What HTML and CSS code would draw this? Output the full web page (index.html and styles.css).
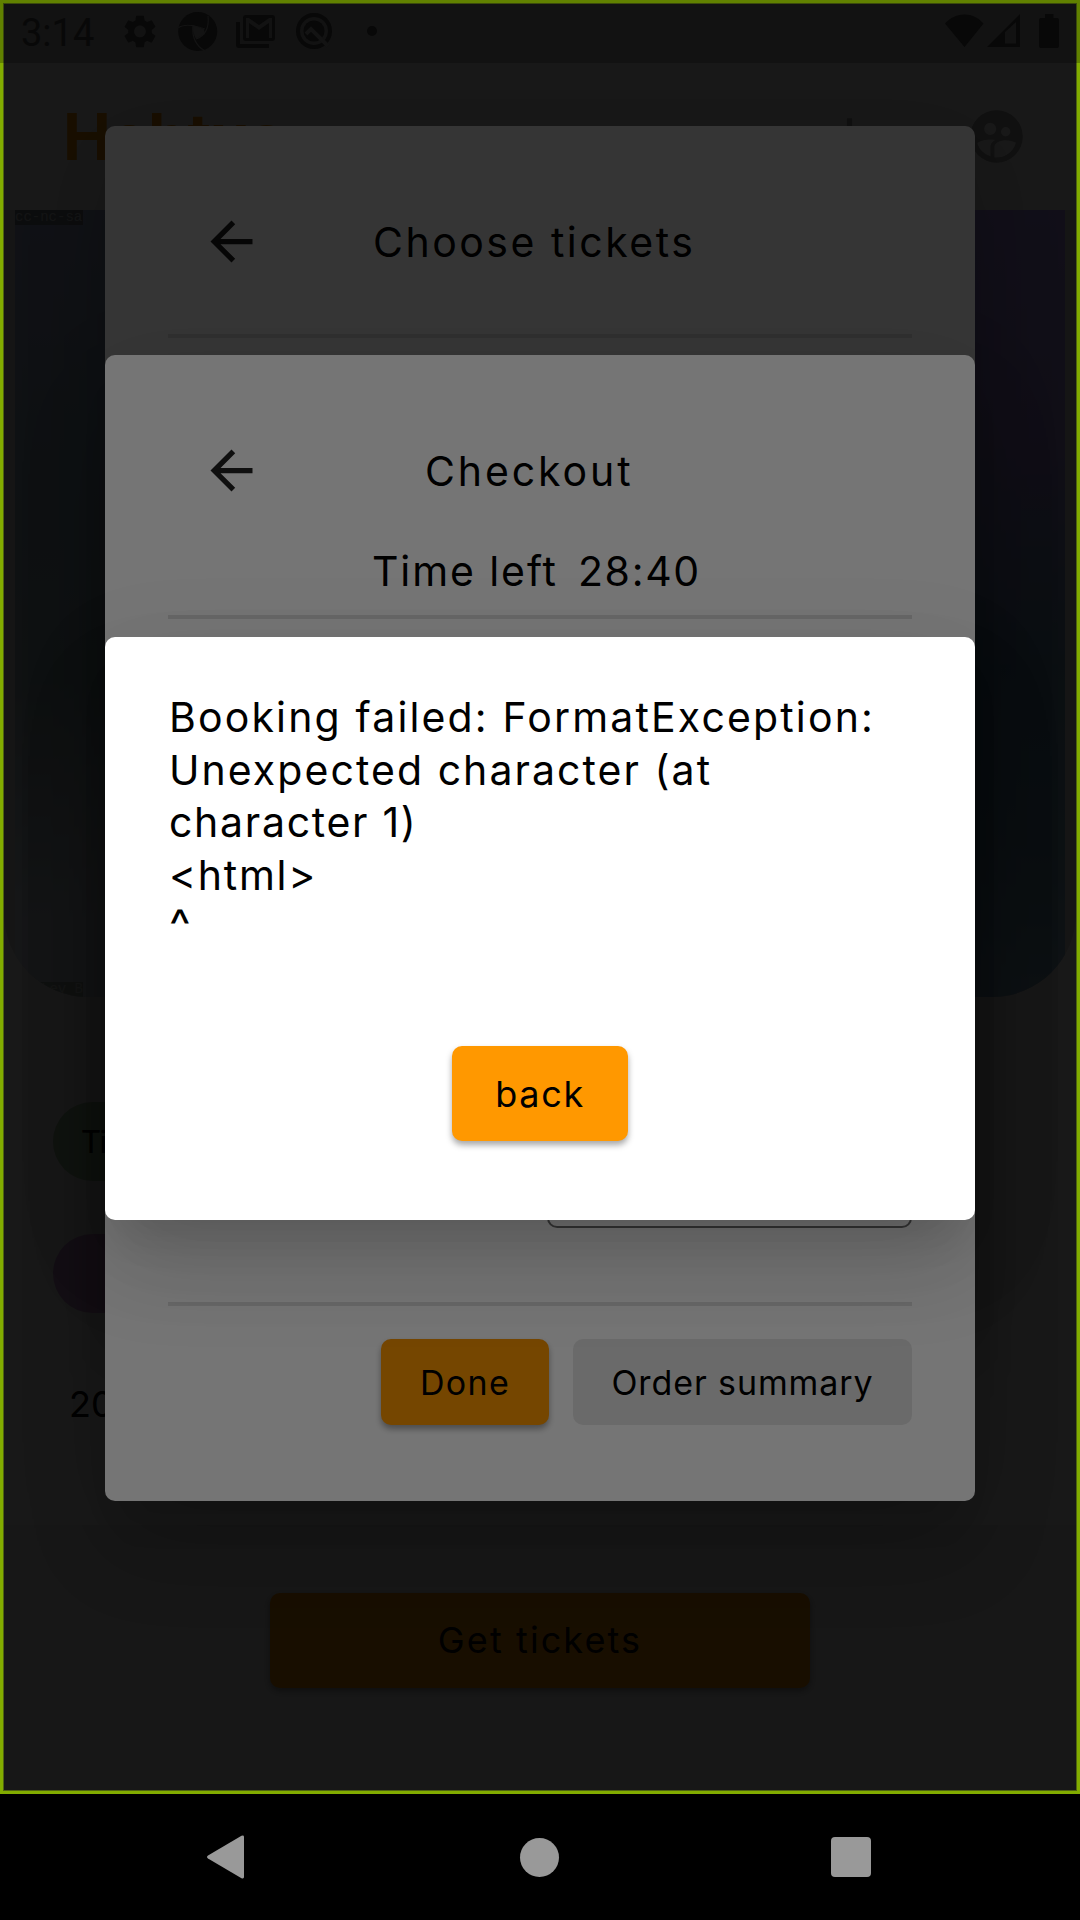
FILE: index.html
```html
<!DOCTYPE html>
<html lang="en">
<head>
<meta charset="utf-8">
<title>Hobtus</title>
<link rel="stylesheet" href="styles.css">
</head>
<body>
<div class="device">
  <div class="screen">
    <div class="app">
      <header class="appbar">
        <span class="brand">Hobtus</span>
        <span class="actions">
          <svg viewBox="0 0 24 24"><path d="M19 13h-6v6h-2v-6H5v-2h6V5h2v6h6z"/></svg>
          <svg viewBox="0 0 24 24"><path fill-rule="evenodd" d="M12 2a10 10 0 1 0 0 20 10 10 0 0 0 0-20zM9.600 6.800a2.300 2.300 0 1 1 0 4.600 2.300 2.300 0 0 1 0-4.600zM15.500 8.400a1.800 1.800 0 1 1 0 3.600 1.800 1.800 0 0 1 0-3.600zM9.700 19.500C7.300 18.800 5.300 16.900 4.700 14.500c1.300-1.100 4.500-1.700 6.800-1.200-1.300.7-1.800 1.700-1.800 2.500zM11.200 20v-4c0-1.700 2.300-2.600 4.300-2.600 1.500 0 3 .4 3.900.9-.8 3.500-4 6-8.200 5.700z"/></svg>
        </span>
      </header>
      <div class="poster"><div class="photo"><span class="tag">cc-nc-sa</span><span class="tag tag-low">Lev B</span></div></div>
      <div class="chips">
        <span class="chip green">Tickets</span>
        <span class="chip purple"></span>
      </div>
      <div class="date">2022-06-18</div>
      <footer class="footer"><div class="cta">Get tickets</div></footer>
    </div>
    <div class="scrim"></div>
    <section class="dialog tickets">
      <div class="head"><svg class="back" viewBox="0 0 24 24"><path d="M20 11H7.830l5.590-5.590L12 4l-8 8 8 8 1.410-1.410L7.830 13H20z"/></svg><span class="title-tickets">Choose tickets</span></div>
      <div class="rule"></div>
    </section>
    <div class="scrim"></div>
    <section class="dialog checkout">
      <div class="head"><svg class="back" viewBox="0 0 24 24"><path d="M20 11H7.830l5.590-5.590L12 4l-8 8 8 8 1.410-1.410L7.830 13H20z"/></svg><span class="title-checkout">Checkout</span></div>
      <div class="timer"><span class="time-label">Time left</span><span class="time-value">28:40</span></div>
      <div class="rule"></div>
      <div class="form"><div class="field"></div></div>
      <div class="rule"></div>
      <div class="row"><span class="btn orange">Done</span><span class="btn grey">Order summary</span></div>
    </section>
    <div class="scrim"></div>
    <section class="dialog error">
      <p class="msg"><span class="wide">Booking failed: FormatException:</span><br><span class="mid">Unexpected character (at</span><br><span class="tight">character 1)</span><br><span class="tight">&lt;html&gt;</span><br><span class="caret">^</span></p>
      <span class="btn orange ok">back</span>
    </section>
    <div class="frame"></div>
    <div class="status">
      <span class="clock">3:14</span>
      <svg class="s-left" viewBox="0 0 280 63">
        <path transform="translate(10.300 11.800) scale(1.640)" d="M19.140 12.940c.04-.3.06-.61.06-.94 0-.32-.02-.64-.07-.94l2.030-1.580c.18-.14.23-.41.12-.61l-1.920-3.320c-.12-.22-.37-.29-.59-.22l-2.390.96c-.5-.38-1.030-.7-1.620-.94l-.36-2.540c-.04-.24-.24-.41-.48-.41h-3.840c-.24 0-.43.17-.47.41l-.36 2.540c-.59.24-1.130.57-1.620.94l-2.390-.96c-.22-.08-.47 0-.59.22L2.740 8.870c-.12.21-.08.47.12.61l2.030 1.580c-.05.3-.09.63-.09.94s.02.64.07.94l-2.030 1.580c-.18.14-.23.41-.12.61l1.920 3.320c.12.22.37.29.59.22l2.390-.96c.5.38 1.030.7 1.620.94l.36 2.540c.05.24.24.41.48.41h3.840c.24 0 .44-.17.47-.41l.36-2.540c.59-.24 1.130-.56 1.620-.94l2.390.96c.22.08.47 0 .59-.22l1.920-3.320c.12-.22.07-.47-.12-.61l-2.010-1.580zM12 15.600c-1.980 0-3.600-1.620-3.600-3.600s1.620-3.600 3.600-3.600 3.600 1.620 3.600 3.600-1.620 3.600-3.600 3.600z"/>
        <circle cx="87.700" cy="31.500" r="19.500"/>
        <path class="cut" d="M83 25l11 4 1 5-9 5q-4-7-3-14z"/>
        <path class="cut-line" d="M68 28q8-6 27 1M83 25q-2 18 12 26M86 39q14-5 12-23"/>
        <path fill-rule="evenodd" d="M136 15h26q3 0 3 3v20q0 3-3 3h-26q-3 0-3-3V18q0-3 3-3zM136 38h3V23l10 7 10-7v15h3V18h-3l-10 7-10-7h-3zM126 22h4v22h29v4h-30q-3 0-3-3z"/>
        <circle class="ring" cx="204" cy="31" r="16"/><circle cx="204" cy="31" r="10.500"/>
        <path class="slash" d="M196 34l5-5 17 17"/>
        <circle cx="262" cy="31" r="5"/>
      </svg>
      <svg class="s-right" viewBox="0 0 120 63"><path d="M5 23.500c11-12 28-12 38.500 0L24.500 47zM47 47 80 14v33zM65 32v11.500h11V22zM99 20q0-2 2-2h4v-4h8.500v4h3.500q2 0 2 2v26q0 2-2 2h-16q-2 0-2-2z" fill-rule="evenodd"/></svg>
    </div>
  </div>
  <nav class="nav">
    <svg viewBox="0 0 40 46"><path d="M38 3v40q0 2-2.500 1.200L2 24.500q-2-1.500 0-3L35.500 1.800Q38 1 38 3z"/></svg>
    <span class="home"></span><span class="recent"></span>
  </nav>
</div>
</body>
</html>
```
FILE: styles.css
```css
* { box-sizing: border-box; }
body { margin: 0; background: #000; font-family: Inter, sans-serif; color: #000; }
span { white-space: nowrap; }
.device { width: 1080px; height: 1920px; display: flex; flex-direction: column; overflow: hidden; }
.screen { position: relative; height: 1794px; overflow: hidden; background: #fff; }
.app { padding-top: 63px; height: 1794px; display: flex; flex-direction: column; }
.appbar { height: 147px; padding: 0 52px 0 63px; display: flex; align-items: center; justify-content: space-between; }
.brand { color: #ff9800; font-size: 64px; font-weight: 700; letter-spacing: -1px; }
.actions { display: flex; align-items: center; gap: 84px; }
.actions svg { width: 63px; height: 63px; fill: #aaa; }
.poster { height: 787px; margin: 0 4px; padding: 0 11px; background: #dadada; border-radius: 0 0 84px 84px; overflow: hidden; }
.photo {
  height: 100%; display: flex; flex-direction: column; justify-content: space-between; align-items: flex-start;
  background:
    linear-gradient(#b29cff, #a896e8 30%, #6e9cba 58%, #7ca6c0 80%, #9cc0dc) right / 50% 100% no-repeat,
    linear-gradient(#a8b2e0, #98b2c8 35%, #a0b8c0 60%, #e0eaf4 90%) left / 50% 100% no-repeat;
}
.tag { width: 68px; height: 15px; background: #7c8690; color: #d0d6dc; font: 14px/15px "Liberation Mono", monospace; }
.tag-low { padding-left: 26px; background: #b4c0b8; color: #e8f0ec; }
.chips { display: flex; flex-direction: column; gap: 53px; margin: 105px 0 0 53px; }
.chip { width: 220px; height: 79px; border-radius: 40px; padding-left: 28px; font-size: 31px; line-height: 79px; letter-spacing: -1.500px; }
.green { background: #b6d9ae; }
.purple { background: #dca6e2; }
.date { margin: 59px 0 89px 69px; font-size: 36px; line-height: 64px; }
.footer { flex: 1; padding-top: 68px; background: #efefef; }
.cta { width: 540px; height: 95px; margin: 0 auto; border-radius: 10px; background: #ff9800; box-shadow: 0 3px 6px rgba(0,0,0,.35); text-align: center; font-size: 36px; line-height: 95px; letter-spacing: 2.100px; }
.scrim { position: absolute; inset: 0; background: rgba(0, 0, 0, .54); }
.dialog { position: absolute; left: 105px; width: 870px; background: #fff; border-radius: 10px; padding: 0 63px; box-shadow: 0 29px 40px -18px rgba(0,0,0,.1), 0 50px 90px -5px rgba(0,0,0,.13), 0 24px 100px 10px rgba(0,0,0,.06); display: flex; flex-direction: column; }
.tickets { top: 126px; height: 1200px; }
.checkout { top: 355px; height: 1146px; }
.error { top: 637px; height: 583px; }
.head { height: 63px; margin-top: 84px; display: flex; align-items: center; font-size: 41px; }
.back { width: 63px; height: 63px; margin-left: 32px; fill: #222; }
.title-tickets { margin-left: 110px; letter-spacing: 2.500px; }
.title-checkout { margin-left: 162px; letter-spacing: 2.900px; }
.rule { height: 4px; background: #e0e0e0; flex: none; }
.tickets .rule { margin-top: 61px; }
.timer { height: 60px; margin: 39px 0 14px 204px; display: flex; align-items: center; gap: 20px; font-size: 41px; }
.time-label { letter-spacing: 1.900px; }
.time-value { letter-spacing: 1.700px; }
.form { height: 683px; padding-bottom: 74px; display: flex; justify-content: flex-end; align-items: flex-end; }
.field { width: 365px; height: 105px; border: 2px solid #777; border-radius: 10px; }
.row { margin-top: 33px; display: flex; justify-content: flex-end; gap: 24px; }
.btn { height: 86px; border-radius: 10px; display: flex; align-items: center; justify-content: center; font-size: 34px; letter-spacing: 1.300px; }
.orange { width: 168px; background: #ff9800; box-shadow: 0 4px 6px rgba(0,0,0,.35); }
.grey { width: 339px; background: #e8e8e8; letter-spacing: .9px; }
.msg { margin: 54px 0 0 1px; font-size: 41px; line-height: 52.500px; height: 355px; white-space: nowrap; }
.wide { letter-spacing: 2.150px; }
.mid { letter-spacing: 2.050px; }
.tight { letter-spacing: 1.700px; }
.caret { font-size: 46px; line-height: 40px; }
.ok { width: 176px; height: 95px; margin: 0 auto; font-size: 36px; letter-spacing: 1.700px; }
.frame { position: absolute; inset: 0; border: 3px solid #82ac00; box-shadow: inset 0 0 0 1px #4f6311; }
.status { position: absolute; top: 0; left: 0; width: 1080px; height: 63px; background: rgba(0,0,0,.25); }
.clock { position: absolute; left: 21px; top: 10px; font: 38px/46px Roboto, sans-serif; color: #080808; }
.s-left { position: absolute; left: 110px; top: 0; width: 280px; height: 63px; fill: #080808; }
.cut { fill: #131313; }
.cut-line { fill: none; stroke: #131313; stroke-width: 1.200; }
.ring { fill: none; stroke: #080808; stroke-width: 4; }
.slash { fill: none; stroke: #131313; stroke-width: 4; }
.s-right { position: absolute; left: 940px; top: 0; width: 120px; height: 63px; fill: #080808; }
.nav { height: 126px; background: #000; display: flex; align-items: center; padding: 0 209px 0 206px; justify-content: space-between; }
.nav svg { width: 40px; height: 46px; fill: #999; }
.home { width: 39px; height: 39px; margin-left: 2px; border-radius: 50%; background: #999; }
.recent { width: 40px; height: 40px; border-radius: 4px; background: #999; }
```
